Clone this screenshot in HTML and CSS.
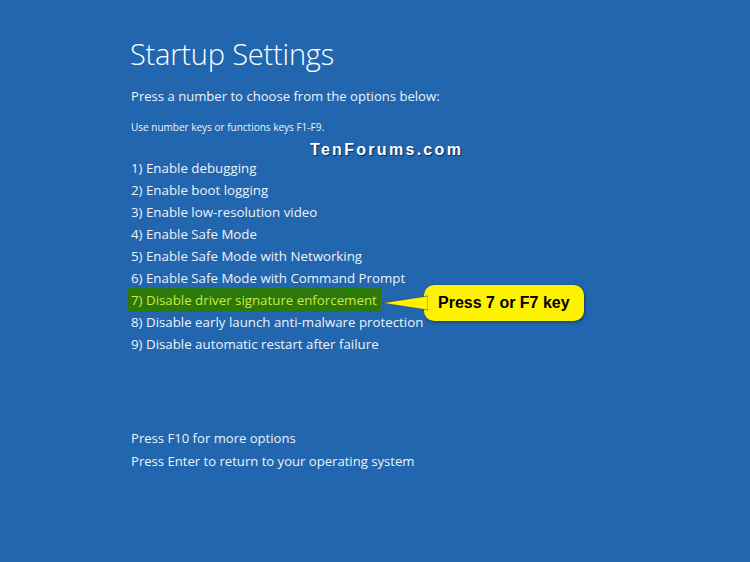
FILE: index.html
```html
<!DOCTYPE html>
<html>
<head>
<meta charset="utf-8">
<link rel="stylesheet" href="styles.css">
</head>
<body>
<main class="screen">
  <h1 class="title">Startup Settings</h1>
  <p class="lead">Press a number to choose from the options below:</p>
  <p class="hint">Use number keys or functions keys F1-F9.</p>
  <div class="watermark-row"><span class="watermark">TenForums.com</span></div>
  <ol class="options">
    <li>1) Enable debugging</li>
    <li>2) Enable boot logging</li>
    <li>3) Enable low-resolution video</li>
    <li>4) Enable Safe Mode</li>
    <li>5) Enable Safe Mode with Networking</li>
    <li>6) Enable Safe Mode with Command Prompt</li>
    <li class="picked"><span class="mark">7) Disable driver signature enforcement</span>
      <div class="callout">
        <svg class="tail" width="46" height="20" viewBox="0 0 46 20"><path d="M46 3 L0 10 L46 17 Z" fill="#fff200" stroke="#1c3a5c" stroke-width="1" stroke-opacity="0.5"/></svg>
        <div class="bubble">Press 7 or F7 key</div>
      </div>
    </li>
    <li>8) Disable early launch anti-malware protection</li>
    <li>9) Disable automatic restart after failure</li>
  </ol>
  <div class="footer">
    <p>Press F10 for more options</p>
    <p>Press Enter to return to your operating system</p>
  </div>
</main>
</body>
</html>
```
FILE: styles.css
```css
html, body {
  margin: 0;
  padding: 0;
}
body {
  background: #2166ae;
  width: 750px;
  height: 562px;
  overflow: hidden;
  font-family: "Open Sans", "Noto Sans", sans-serif;
  color: #ffffff;
}
.screen {
  padding: 34px 0 0 130px;
}
.title {
  margin: 0;
  font-size: 29px;
  font-weight: 300;
  line-height: 40px;
  letter-spacing: -0.2px;
}
.lead {
  margin: 12px 0 0 1px;
  font-size: 13.1px;
  line-height: 20px;
  color: #eef3fa;
}
.hint {
  margin: 14px 0 0 1px;
  font-size: 10px;
  line-height: 14px;
  color: #eef3fa;
}
.watermark-row {
  margin: 4px 0 0 180px;
  height: 20px;
}
.watermark {
  font-family: "Liberation Sans", Arial, sans-serif;
  font-weight: bold;
  font-size: 16px;
  letter-spacing: 2.3px;
  line-height: 20px;
  color: #ffffff;
  text-shadow: 1px 1px 1px #0b2a52;
}
.options {
  list-style: none;
  margin: -1px 0 0 1px;
  padding: 0;
  font-size: 13.3px;
  line-height: 22px;
  color: #eef3fa;
}
.options li {
  position: relative;
  height: 22px;
}
.picked .mark {
  display: inline-block;
  background: #2b780e;
  color: #cdeb3a;
  margin-left: -3px;
  padding: 0 4px 0 3px;
  line-height: 24px;
  margin-top: -1px;
}
.callout {
  position: absolute;
  left: 251px;
  top: -4px;
  display: flex;
  align-items: center;
}
.tail {
  display: block;
  margin-right: -4px;
  position: relative;
  z-index: 1;
}
.bubble {
  background: #fff200;
  color: #000;
  font-family: "Liberation Sans", Arial, sans-serif;
  font-weight: bold;
  font-size: 16px;
  line-height: 36px;
  height: 36px;
  padding: 0 14px 0 14px;
  border-radius: 10px;
  box-shadow: 1px 1px 3px rgba(10, 30, 60, 0.6);
}
.footer {
  margin: 72px 0 0 1px;
  font-size: 13.1px;
  line-height: 23px;
  color: #eef3fa;
}
.footer p {
  margin: 0;
}
```
